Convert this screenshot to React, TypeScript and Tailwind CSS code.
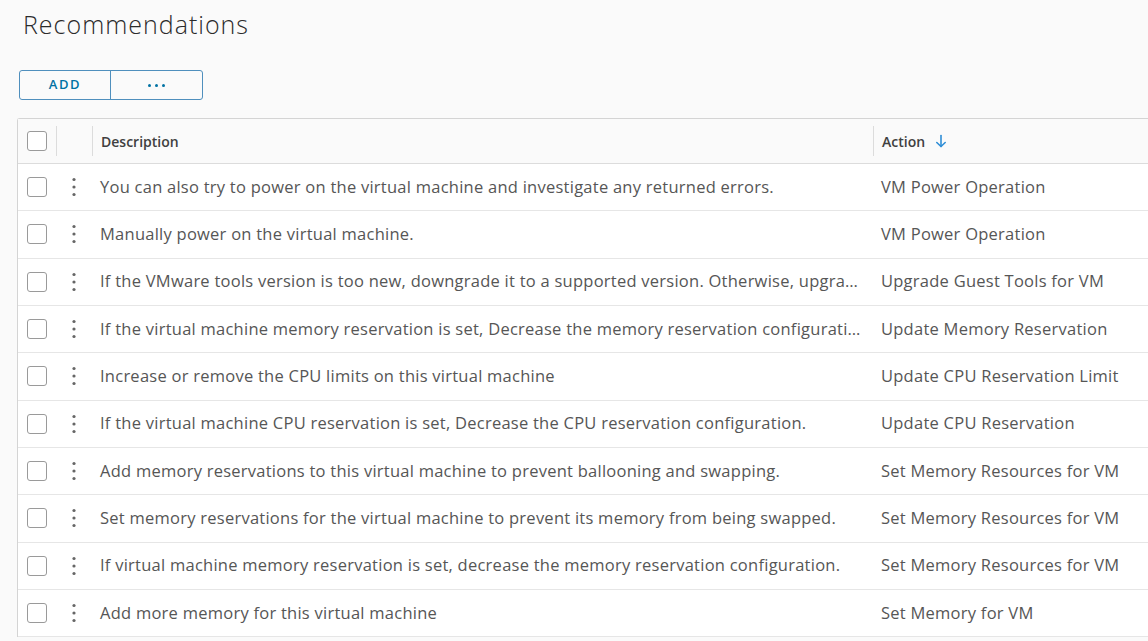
import React from 'react';

const rows: { desc: string; action: string }[] = [
  { desc: 'You can also try to power on the virtual machine and investigate any returned errors.', action: 'VM Power Operation' },
  { desc: 'Manually power on the virtual machine.', action: 'VM Power Operation' },
  { desc: 'If the VMware tools version is too new, downgrade it to a supported version. Otherwise, upgrade it to the latest version.', action: 'Upgrade Guest Tools for VM' },
  { desc: 'If the virtual machine memory reservation is set, Decrease the memory reservation configuration.', action: 'Update Memory Reservation' },
  { desc: 'Increase or remove the CPU limits on this virtual machine', action: 'Update CPU Reservation Limit' },
  { desc: 'If the virtual machine CPU reservation is set, Decrease the CPU reservation configuration.', action: 'Update CPU Reservation' },
  { desc: 'Add memory reservations to this virtual machine to prevent ballooning and swapping.', action: 'Set Memory Resources for VM' },
  { desc: 'Set memory reservations for the virtual machine to prevent its memory from being swapped.', action: 'Set Memory Resources for VM' },
  { desc: 'If virtual machine memory reservation is set, decrease the memory reservation configuration.', action: 'Set Memory Resources for VM' },
  { desc: 'Add more memory for this virtual machine', action: 'Set Memory for VM' },
];

const Checkbox = () => (
  <div className="w-[20px] h-[20px] rounded-[3px] border border-[#9a9a9a] bg-white" />
);

const Dots = () => (
  <svg width="4" height="20" viewBox="0 0 4 20" className="text-[#666]">
    <circle cx="2" cy="2.5" r="1.6" fill="currentColor" />
    <circle cx="2" cy="10" r="1.6" fill="currentColor" />
    <circle cx="2" cy="17.5" r="1.6" fill="currentColor" />
  </svg>
);

export default function App() {
  return (
    <div className="w-[1148px] h-[641px] overflow-hidden bg-[#fafafa] text-[#565656]" style={{ fontFamily: '"Open Sans", "Liberation Sans", sans-serif' }}>
      <h1 className="pl-[23px] pt-[8px] text-[25px] leading-[32px] font-light tracking-[1px] text-[#2b2b2b]">Recommendations</h1>

      <div className="flex ml-[19px] mt-[30px] w-[184px] h-[30px] border border-[#4f8fbd] rounded-[3px] text-[#0072a3]">
        <button className="w-[91px] text-[13px] font-semibold tracking-[1.6px] border-r border-[#4f8fbd]">ADD</button>
        <button className="flex-1 flex items-center justify-center gap-[4px]">
          <span className="w-[3px] h-[3px] rounded-full bg-[#0072a3]" />
          <span className="w-[3px] h-[3px] rounded-full bg-[#0072a3]" />
          <span className="w-[3px] h-[3px] rounded-full bg-[#0072a3]" />
        </button>
      </div>

      <div className="ml-[17px] mt-[18px] border-l border-t border-[#d4d4d4] rounded-tl-[3px] bg-white">
        <div className="flex h-[45px] items-center bg-[#fafafa] border-b border-[#dcdcdc] text-[14px] font-semibold text-[#404040]">
          <div className="w-[38px] flex items-center justify-center h-full">
            <Checkbox />
          </div>
          <div className="w-[36px] h-[30px] border-l border-[#dcdcdc]" />
          <div className="w-[781px] h-[30px] border-l border-[#dcdcdc] flex items-center pl-[8px]">Description</div>
          <div className="flex-1 h-[30px] border-l border-[#dcdcdc] flex items-center pl-[8px] gap-[10px]">
            <span>Action</span>
            <svg width="12" height="14" viewBox="0 0 12 14" fill="none" stroke="#2f8ed6" strokeWidth="1.6" strokeLinecap="round" strokeLinejoin="round">
              <path d="M6 1.5v11" />
              <path d="M1.8 8.5 6 12.5l4.2-4" />
            </svg>
          </div>
        </div>
        {rows.map((r, i) => (
          <div key={i} className="flex h-[47.33px] items-center border-b border-[#e6e6e6] text-[16.5px] tracking-[0.25px]">
            <div className="w-[38px] flex items-center justify-center">
              <Checkbox />
            </div>
            <div className="w-[36px] flex items-center justify-center">
              <Dots />
            </div>
            <div className="w-[781px] pl-[8px] pr-[10px] truncate">{r.desc}</div>
            <div className="flex-1 pl-[8px] whitespace-nowrap">{r.action}</div>
          </div>
        ))}
      </div>
    </div>
  );
}
